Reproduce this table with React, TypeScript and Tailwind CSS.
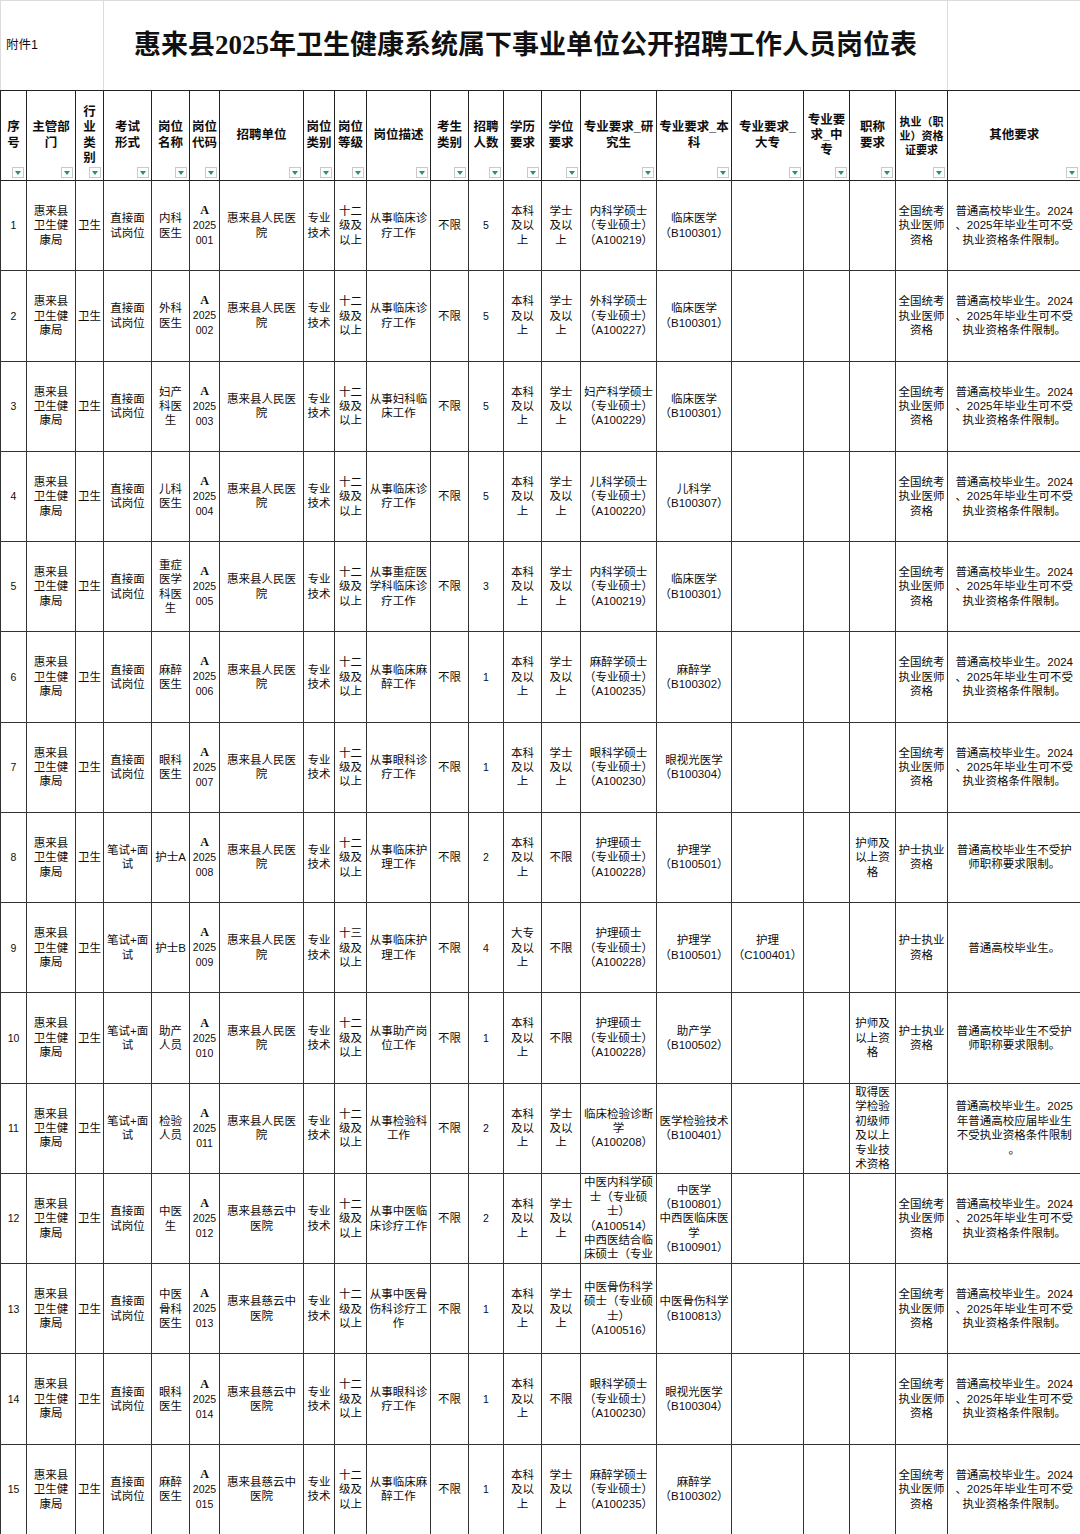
import type { ReactNode } from 'react';

interface Job {
  seq: string;
  exam: string;
  name: string;
  code: string;
  unit: string;
  level: string;
  desc: string;
  num: string;
  edu: string;
  degree: string;
  grad: string;
  bach: string;
  college: string;
  title: string;
  cert: string;
  other: string;
}

const COL_WIDTHS = [26, 49, 28, 48, 38, 30, 84, 31, 32, 64, 38, 35, 38, 39, 76, 75, 72, 46, 46, 52, 133];

const HEADERS = [
  '序\n号',
  '主管部\n门',
  '行\n业\n类\n别',
  '考试\n形式',
  '岗位\n名称',
  '岗位\n代码',
  '招聘单位',
  '岗位\n类别',
  '岗位\n等级',
  '岗位描述',
  '考生\n类别',
  '招聘\n人数',
  '学历\n要求',
  '学位\n要求',
  '专业要求_研\n究生',
  '专业要求_本\n科',
  '专业要求_\n大专',
  '专业要\n求_中\n专',
  '职称\n要求',
  '执业（职\n业）资格\n证要求',
  '其他要求',
];

const DIRECT = '直接面\n试岗位';
const WRITTEN = '笔试+面\n试';
const PEOPLE = '惠来县人民医\n院';
const CIYUN = '惠来县慈云中\n医院';
const L12 = '十二\n级及\n以上';
const BK = '本科\n及以\n上';
const XS = '学士\n及以\n上';
const DOC_CERT = '全国统考\n执业医师\n资格';
const DOC_OTHER = '普通高校毕业生。2024\n、2025年毕业生可不受\n执业资格条件限制。';
const NURSE_TITLE = '护师及\n以上资\n格';
const NURSE_CERT = '护士执业\n资格';
const NURSE_OTHER = '普通高校毕业生不受护\n师职称要求限制。';

const doctor = (seq: string, name: string, unit: string, desc: string, num: string, grad: string, bach: string, degree = XS): Job => ({
  seq,
  exam: DIRECT,
  name,
  code: seq.padStart(3, '0'),
  unit,
  level: L12,
  desc,
  num,
  edu: BK,
  degree,
  grad,
  bach,
  college: '',
  title: '',
  cert: DOC_CERT,
  other: DOC_OTHER,
});

const JOBS: Job[] = [
  doctor('1', '内科\n医生', PEOPLE, '从事临床诊\n疗工作', '5', '内科学硕士\n（专业硕士）\n（A100219）', '临床医学\n（B100301）'),
  doctor('2', '外科\n医生', PEOPLE, '从事临床诊\n疗工作', '5', '外科学硕士\n（专业硕士）\n（A100227）', '临床医学\n（B100301）'),
  doctor('3', '妇产\n科医\n生', PEOPLE, '从事妇科临\n床工作', '5', '妇产科学硕士\n（专业硕士）\n（A100229）', '临床医学\n（B100301）'),
  doctor('4', '儿科\n医生', PEOPLE, '从事临床诊\n疗工作', '5', '儿科学硕士\n（专业硕士）\n（A100220）', '儿科学\n（B100307）'),
  doctor('5', '重症\n医学\n科医\n生', PEOPLE, '从事重症医\n学科临床诊\n疗工作', '3', '内科学硕士\n（专业硕士）\n（A100219）', '临床医学\n（B100301）'),
  doctor('6', '麻醉\n医生', PEOPLE, '从事临床麻\n醉工作', '1', '麻醉学硕士\n（专业硕士）\n（A100235）', '麻醉学\n（B100302）'),
  doctor('7', '眼科\n医生', PEOPLE, '从事眼科诊\n疗工作', '1', '眼科学硕士\n（专业硕士）\n（A100230）', '眼视光医学\n（B100304）'),
  {
    seq: '8', exam: WRITTEN, name: '护士A', code: '008', unit: PEOPLE, level: L12, desc: '从事临床护\n理工作', num: '2',
    edu: BK, degree: '不限', grad: '护理硕士\n（专业硕士）\n（A100228）', bach: '护理学\n（B100501）', college: '',
    title: NURSE_TITLE, cert: NURSE_CERT, other: NURSE_OTHER,
  },
  {
    seq: '9', exam: WRITTEN, name: '护士B', code: '009', unit: PEOPLE, level: '十三\n级及\n以上', desc: '从事临床护\n理工作', num: '4',
    edu: '大专\n及以\n上', degree: '不限', grad: '护理硕士\n（专业硕士）\n（A100228）', bach: '护理学\n（B100501）',
    college: '护理\n（C100401）', title: '', cert: NURSE_CERT, other: '普通高校毕业生。',
  },
  {
    seq: '10', exam: WRITTEN, name: '助产\n人员', code: '010', unit: PEOPLE, level: L12, desc: '从事助产岗\n位工作', num: '1',
    edu: BK, degree: '不限', grad: '护理硕士\n（专业硕士）\n（A100228）', bach: '助产学\n（B100502）', college: '',
    title: NURSE_TITLE, cert: NURSE_CERT, other: NURSE_OTHER,
  },
  {
    seq: '11', exam: WRITTEN, name: '检验\n人员', code: '011', unit: PEOPLE, level: L12, desc: '从事检验科\n工作', num: '2',
    edu: BK, degree: XS, grad: '临床检验诊断\n学\n（A100208）', bach: '医学检验技术\n（B100401）', college: '',
    title: '取得医\n学检验\n初级师\n及以上\n专业技\n术资格', cert: '',
    other: '普通高校毕业生。2025\n年普通高校应届毕业生\n不受执业资格条件限制\n。',
  },
  doctor(
    '12', '中医\n生', CIYUN, '从事中医临\n床诊疗工作', '2',
    '中医内科学硕\n士（专业硕\n士）\n（A100514）\n中西医结合临\n床硕士（专业',
    '中医学\n（B100801）\n中西医临床医\n学\n（B100901）',
  ),
  doctor('13', '中医\n骨科\n医生', CIYUN, '从事中医骨\n伤科诊疗工\n作', '1', '中医骨伤科学\n硕士（专业硕\n士）\n（A100516）', '中医骨伤科学\n（B100813）'),
  doctor('14', '眼科\n医生', CIYUN, '从事眼科诊\n疗工作', '1', '眼科学硕士\n（专业硕士）\n（A100230）', '眼视光医学\n（B100304）', '不限'),
  doctor('15', '麻醉\n医生', CIYUN, '从事临床麻\n醉工作', '1', '麻醉学硕士\n（专业硕士）\n（A100235）', '麻醉学\n（B100302）'),
];

function FilterButton() {
  return (
    <span className="absolute bottom-[2px] right-[2px] flex h-[11px] w-[12px] items-center justify-center border border-[#c9c9c9] bg-white">
      <svg width="6" height="4" viewBox="0 0 6 4">
        <polygon points="0,0 6,0 3,4" fill="#23936a" />
      </svg>
    </span>
  );
}

function Cell({ children, className = '' }: { children?: ReactNode; className?: string }) {
  return (
    <td className={`overflow-hidden whitespace-pre border border-[#333] px-0 py-0 text-center align-middle ${className}`}>
      {children}
    </td>
  );
}

function CodeCell({ code }: { code: string }) {
  return (
    <Cell>
      <div className="font-['Liberation_Serif',serif] text-[12px] font-bold leading-[15px]">A</div>
      <div className="text-[10.5px] leading-[15px]">2025</div>
      <div className="text-[10.5px] leading-[15px]">{code}</div>
    </Cell>
  );
}

export default function App() {
  return (
    <div className="h-[1534px] w-[1080px] overflow-hidden bg-white font-['Liberation_Sans','Noto_Sans_CJK_SC',sans-serif] text-[#0d0d0d]">
      <table className="w-[1080px] table-fixed border-collapse">
        <colgroup>
          {COL_WIDTHS.map((w, i) => (
            <col key={i} style={{ width: w }} />
          ))}
        </colgroup>
        <tbody>
          <tr className="h-[90px]">
            <td colSpan={3} className="border-x border-t border-b border-x-[#dcdcdc] border-t-[#dcdcdc] border-b-[#222] pl-[5px] text-left align-middle text-[12.5px]">
              附件1
            </td>
            <td
              colSpan={17}
              className="border-x border-t border-b border-x-[#dcdcdc] border-t-[#dcdcdc] border-b-[#222] text-center align-middle font-['Liberation_Serif','Noto_Sans_CJK_SC',serif] text-[27px] font-bold text-[#111]"
            >
              惠来县2025年卫生健康系统属下事业单位公开招聘工作人员岗位表
            </td>
            <td className="border-x border-t border-b border-x-[#dcdcdc] border-t-[#dcdcdc] border-b-[#222]" />
          </tr>

          <tr className="h-[90px]">
            {HEADERS.map((label, i) => (
              <td
                key={label}
                className={`relative overflow-hidden whitespace-pre border border-[#222] px-[1px] text-center align-middle font-bold ${
                  i === 19 ? 'text-[11px] leading-[14px]' : 'text-[12.5px] leading-[15.3px]'
                }`}
              >
                {label}
                <FilterButton />
              </td>
            ))}
          </tr>

          {JOBS.map((job) => (
            <tr key={job.seq} className="h-[90.27px] text-[11.5px] leading-[14.4px]">
              <Cell className="text-[10.5px]">{job.seq}</Cell>
              <Cell>{'惠来县\n卫生健\n康局'}</Cell>
              <Cell>卫生</Cell>
              <Cell>{job.exam}</Cell>
              <Cell>{job.name}</Cell>
              <CodeCell code={job.code} />
              <Cell>{job.unit}</Cell>
              <Cell>{'专业\n技术'}</Cell>
              <Cell>{job.level}</Cell>
              <Cell>{job.desc}</Cell>
              <Cell>不限</Cell>
              <Cell className="text-[10.5px]">{job.num}</Cell>
              <Cell>{job.edu}</Cell>
              <Cell>{job.degree}</Cell>
              <Cell>{job.grad}</Cell>
              <Cell>{job.bach}</Cell>
              <Cell>{job.college}</Cell>
              <Cell />
              <Cell>{job.title}</Cell>
              <Cell>{job.cert}</Cell>
              <Cell>{job.other}</Cell>
            </tr>
          ))}
        </tbody>
      </table>
    </div>
  );
}
